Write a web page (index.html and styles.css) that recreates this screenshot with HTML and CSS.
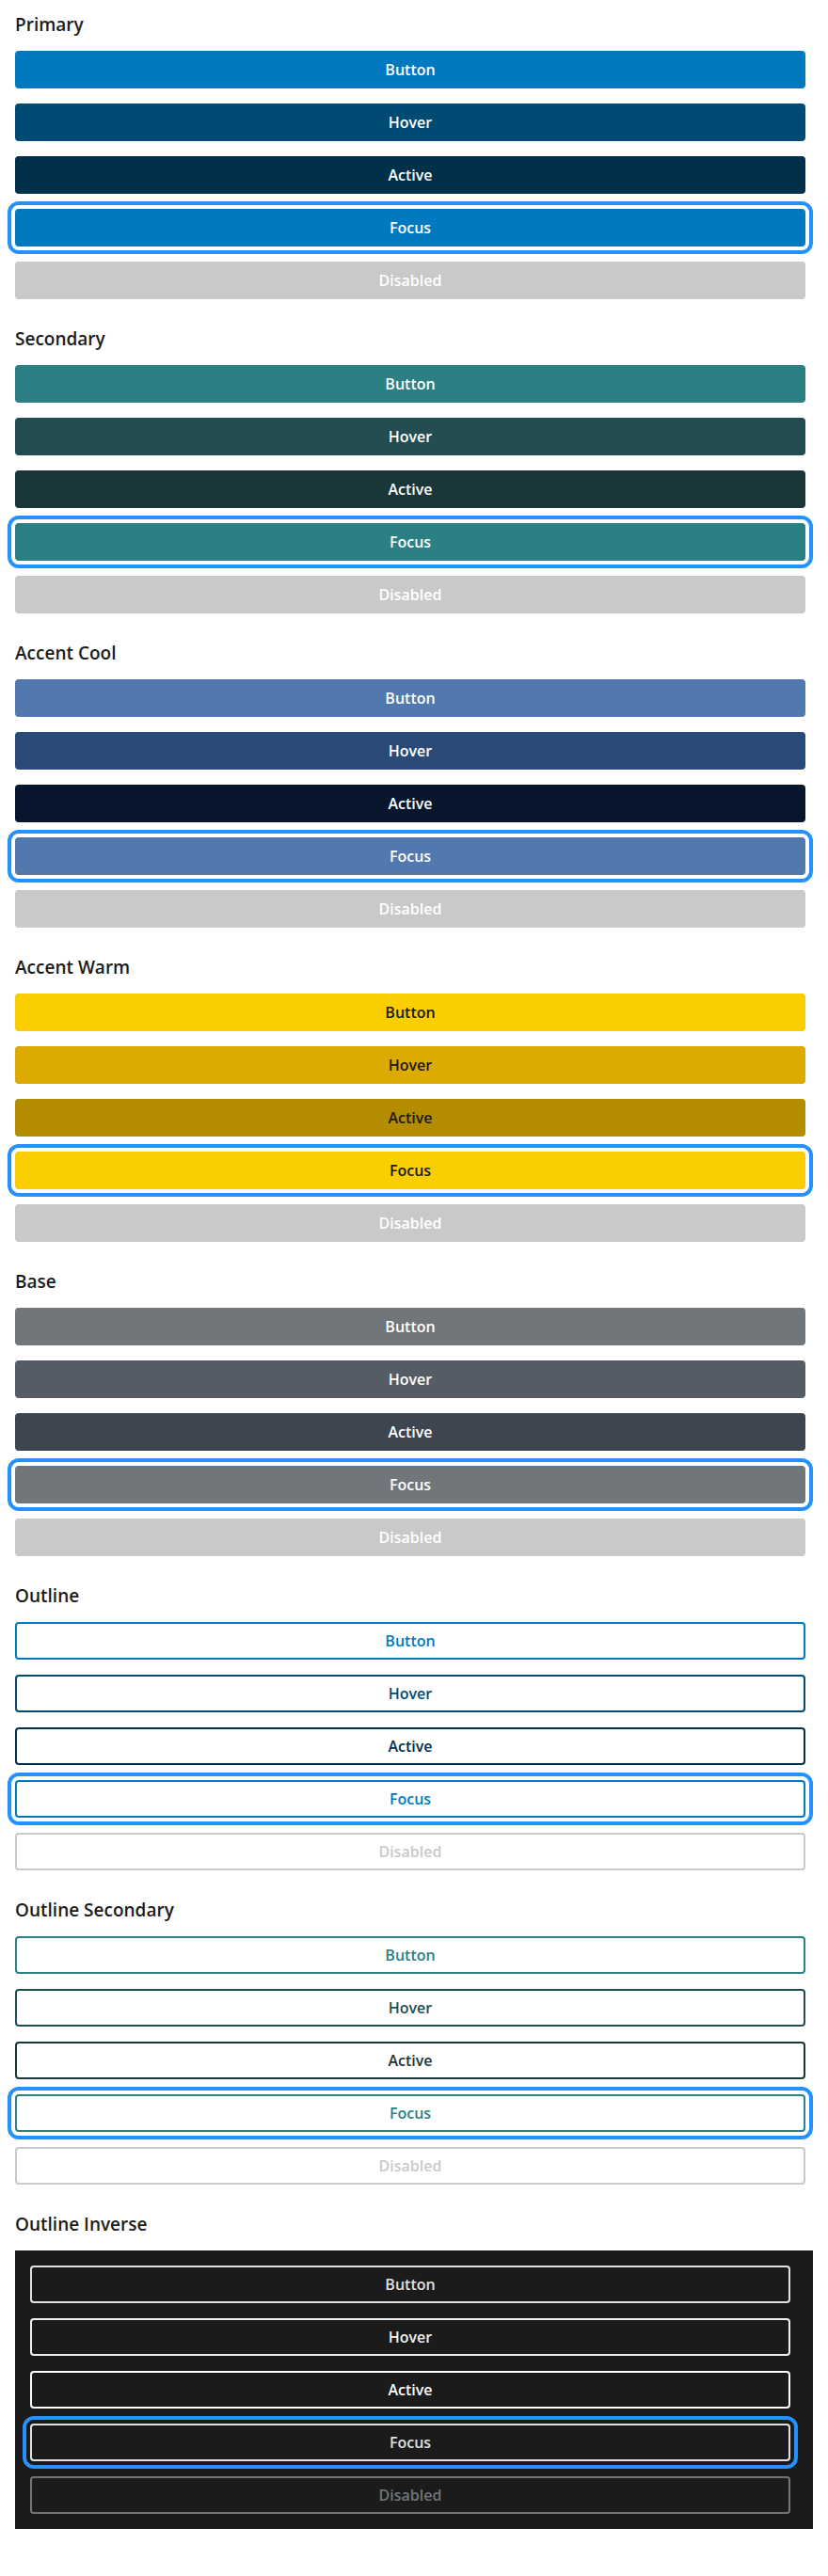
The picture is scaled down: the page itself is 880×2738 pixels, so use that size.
FILE: index.html
```html
<!DOCTYPE html>
<html lang="en">
<head>
<meta charset="utf-8">
<title>Buttons</title>
<link rel="stylesheet" href="styles.css">
</head>
<body>
<main class="page">
  <section class="group primary">
    <h2 class="group-title">Primary</h2>
    <div class="stack">
      <button class="btn">Button</button>
      <button class="btn is-hover">Hover</button>
      <button class="btn is-active">Active</button>
      <button class="btn is-focus">Focus</button>
      <button class="btn is-disabled">Disabled</button>
    </div>
  </section>
  <section class="group secondary">
    <h2 class="group-title">Secondary</h2>
    <div class="stack">
      <button class="btn">Button</button>
      <button class="btn is-hover">Hover</button>
      <button class="btn is-active">Active</button>
      <button class="btn is-focus">Focus</button>
      <button class="btn is-disabled">Disabled</button>
    </div>
  </section>
  <section class="group accent-cool">
    <h2 class="group-title">Accent Cool</h2>
    <div class="stack">
      <button class="btn">Button</button>
      <button class="btn is-hover">Hover</button>
      <button class="btn is-active">Active</button>
      <button class="btn is-focus">Focus</button>
      <button class="btn is-disabled">Disabled</button>
    </div>
  </section>
  <section class="group accent-warm">
    <h2 class="group-title">Accent Warm</h2>
    <div class="stack">
      <button class="btn">Button</button>
      <button class="btn is-hover">Hover</button>
      <button class="btn is-active">Active</button>
      <button class="btn is-focus">Focus</button>
      <button class="btn is-disabled">Disabled</button>
    </div>
  </section>
  <section class="group base">
    <h2 class="group-title">Base</h2>
    <div class="stack">
      <button class="btn">Button</button>
      <button class="btn is-hover">Hover</button>
      <button class="btn is-active">Active</button>
      <button class="btn is-focus">Focus</button>
      <button class="btn is-disabled">Disabled</button>
    </div>
  </section>
  <section class="group outline">
    <h2 class="group-title">Outline</h2>
    <div class="stack">
      <button class="btn">Button</button>
      <button class="btn is-hover">Hover</button>
      <button class="btn is-active">Active</button>
      <button class="btn is-focus">Focus</button>
      <button class="btn is-disabled">Disabled</button>
    </div>
  </section>
  <section class="group outline-secondary">
    <h2 class="group-title">Outline Secondary</h2>
    <div class="stack">
      <button class="btn">Button</button>
      <button class="btn is-hover">Hover</button>
      <button class="btn is-active">Active</button>
      <button class="btn is-focus">Focus</button>
      <button class="btn is-disabled">Disabled</button>
    </div>
  </section>
  <section class="group outline-inverse">
    <h2 class="group-title">Outline Inverse</h2>
    <div class="stack dark-panel">
      <button class="btn">Button</button>
      <button class="btn is-hover">Hover</button>
      <button class="btn is-active">Active</button>
      <button class="btn is-focus">Focus</button>
      <button class="btn is-disabled">Disabled</button>
    </div>
  </section>
</main>
</body>
</html>
```

FILE: styles.css
```css
* { box-sizing: border-box; }

html, body {
  margin: 0;
  padding: 0;
  background: #ffffff;
}

.page {
  padding: 0 16px;
}

.group {
  padding: 14px 0 16px;
}

.group-title {
  margin: 0 0 16px;
  font-family: "Open Sans", "Noto Sans", sans-serif;
  font-weight: 600;
  font-size: 19px;
  line-height: 24px;
  color: #1b1b1b;
  letter-spacing: 0;
}

.stack {
  display: flex;
  flex-direction: column;
  gap: 16px;
}

.btn {
  display: block;
  width: calc(100% - 8px);
  height: 40px;
  margin: 0 8px 0 0;
  padding: 0 20px;
  border: 0;
  border-radius: 4px;
  font-family: "Open Sans", "Noto Sans", sans-serif;
  font-weight: 600;
  font-size: 16px;
  line-height: 40px;
  text-align: center;
  color: #ffffff;
  background: #0079c1;
  cursor: pointer;
}

.btn.is-focus {
  outline: 4px solid #2491ff;
  outline-offset: 4px;
}

.btn.is-disabled {
  background: #c9c9c9;
  color: #ffffff;
}

/* Primary */
.primary .btn { background: #0079c1; }
.primary .btn.is-hover { background: #004b73; }
.primary .btn.is-active { background: #00304a; }
.primary .btn.is-disabled { background: #c9c9c9; }

/* Secondary */
.secondary .btn { background: #2a8083; }
.secondary .btn.is-hover { background: #224e52; }
.secondary .btn.is-active { background: #1b3638; }
.secondary .btn.is-disabled { background: #c9c9c9; }

/* Accent cool */
.accent-cool .btn { background: #5279ad; }
.accent-cool .btn.is-hover { background: #2a4b78; }
.accent-cool .btn.is-active { background: #07162d; }
.accent-cool .btn.is-disabled { background: #c9c9c9; }

/* Accent warm */
.accent-warm .btn { background: #face00; color: #1b1b1b; }
.accent-warm .btn.is-hover { background: #ddaa01; }
.accent-warm .btn.is-active { background: #b38c00; }
.accent-warm .btn.is-disabled { background: #c9c9c9; color: #ffffff; }

/* Base */
.base .btn { background: #71767a; }
.base .btn.is-hover { background: #565c65; }
.base .btn.is-active { background: #3d4551; }
.base .btn.is-disabled { background: #c9c9c9; }

/* Outline */
.outline .btn {
  background: #ffffff;
  color: #0079c1;
  box-shadow: inset 0 0 0 2px #0079c1;
}
.outline .btn.is-hover { color: #004b73; box-shadow: inset 0 0 0 2px #004b73; }
.outline .btn.is-active { color: #00304a; box-shadow: inset 0 0 0 2px #00304a; }
.outline .btn.is-disabled { color: #c9c9c9; box-shadow: inset 0 0 0 2px #c9c9c9; }

/* Outline secondary */
.outline-secondary .btn {
  background: #ffffff;
  color: #2a8083;
  box-shadow: inset 0 0 0 2px #2a8083;
}
.outline-secondary .btn.is-hover { color: #224e52; box-shadow: inset 0 0 0 2px #224e52; }
.outline-secondary .btn.is-active { color: #1b3638; box-shadow: inset 0 0 0 2px #1b3638; }
.outline-secondary .btn.is-disabled { color: #c9c9c9; box-shadow: inset 0 0 0 2px #c9c9c9; }

/* Outline inverse */
.dark-panel {
  background: #1b1b1b;
  padding: 16px 16px 16px 16px;
  margin-top: 2px;
}
.outline-inverse .btn {
  background: transparent;
  color: #dfe1e2;
  box-shadow: inset 0 0 0 2px #dfe1e2;
}
.outline-inverse .btn.is-hover { color: #f0f0f0; box-shadow: inset 0 0 0 2px #f0f0f0; }
.outline-inverse .btn.is-active { color: #ffffff; box-shadow: inset 0 0 0 2px #ffffff; }
.outline-inverse .btn.is-disabled { color: #71767a; box-shadow: inset 0 0 0 2px #71767a; }
```
